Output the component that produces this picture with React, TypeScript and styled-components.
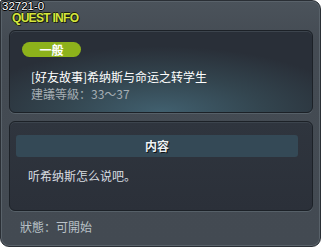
import React from 'react';
import styled, { createGlobalStyle } from 'styled-components';

const GlobalStyle = createGlobalStyle`
  body {
    margin: 0;
    background: #ffffff;
  }
`;

const cjk = `"Noto Sans CJK SC", "Noto Sans CJK JP", "Liberation Sans", sans-serif`;

function App() {
  return (
    <>
      <GlobalStyle />
      <Window>
        <IdLabel>32721-0</IdLabel>
        <Header>QUEST INFO</Header>
        <SummaryPanel>
          <Badge>一般</Badge>
          <QuestTitle>[好友故事]希纳斯与命运之转学生</QuestTitle>
          <Level>建議等級：33～37</Level>
        </SummaryPanel>
        <ContentPanel>
          <SectionBar>内容</SectionBar>
          <Body>听希纳斯怎么说吧。</Body>
        </ContentPanel>
        <Status>狀態：可開始</Status>
      </Window>
    </>
  );
}

const Window = styled.div`
  position: relative;
  box-sizing: border-box;
  width: 321px;
  height: 247px;
  display: flex;
  flex-direction: column;
  padding: 10px 7px 0 8px;
  background: linear-gradient(#4b535b, #444b53 40px, #434a52);
  border: 1px solid #2a2f35;
  border-radius: 2px 9px 9px 9px;
  box-shadow: inset 0 0 0 1px #59626a;
`;

const IdLabel = styled.div`
  position: absolute;
  top: 0;
  left: 1px;
  font-family: "Liberation Sans", sans-serif;
  font-size: 11.5px;
  line-height: 11px;
  color: #ffffff;
  text-shadow: 1px 0 0 #000, -1px 0 0 #000, 0 1px 0 #000, 0 -1px 0 #000;
`;

const Header = styled.div`
  height: 19px;
  padding-left: 3px;
  font-family: "Liberation Sans", sans-serif;
  font-weight: bold;
  font-size: 12px;
  line-height: 14px;
  letter-spacing: -0.7px;
  color: #d5e63c;
  text-shadow: 1px 1px 0 #1a1e10, -1px 0 0 #1a1e10, 0 -1px 0 #1a1e10;
`;

const Panel = styled.div`
  box-sizing: border-box;
  border: 1px solid #1c2127;
  border-radius: 6px;
  box-shadow: 0 1px 0 #566068, inset 0 1px 0 #3c444d;
`;

const SummaryPanel = styled(Panel)`
  height: 83px;
  padding: 11px 12px 0;
  background: radial-gradient(ellipse 75% 95% at 50% 100%, #41606f 0%, #33454f 45%, #292f38 85%);
`;

const Badge = styled.div`
  width: 59px;
  height: 15px;
  border-radius: 8px;
  background: #8db21b;
  color: #ffffff;
  font-family: ${cjk};
  font-weight: bold;
  font-size: 12px;
  line-height: 15px;
  text-align: center;
`;

const QuestTitle = styled.div`
  margin-top: 12px;
  padding-left: 9px;
  font-family: ${cjk};
  font-size: 12px;
  line-height: 16px;
  color: #ffffff;
`;

const Level = styled.div`
  padding-left: 9px;
  margin-top: 1px;
  font-family: ${cjk};
  font-size: 12px;
  line-height: 16px;
  color: #a6aeb4;
`;

const ContentPanel = styled(Panel)`
  height: 90px;
  margin-top: 8px;
  padding: 13px 14px 0 6px;
  background: linear-gradient(#2f353e, #2b3039);
`;

const SectionBar = styled.div`
  height: 22px;
  border-radius: 3px;
  background: #344956;
  color: #eef2f4;
  font-family: ${cjk};
  font-weight: bold;
  font-size: 12px;
  line-height: 22px;
  text-align: center;
  text-shadow: 1px 1px 0 #0d1115;
`;

const Body = styled.div`
  margin-top: 11px;
  padding-left: 12px;
  font-family: ${cjk};
  font-size: 12px;
  line-height: 16px;
  color: #d9dee2;
`;

const Status = styled.div`
  margin-top: 8px;
  padding-left: 11px;
  font-family: ${cjk};
  font-size: 12px;
  line-height: 16px;
  color: #bac2c8;
`;

export default App;
